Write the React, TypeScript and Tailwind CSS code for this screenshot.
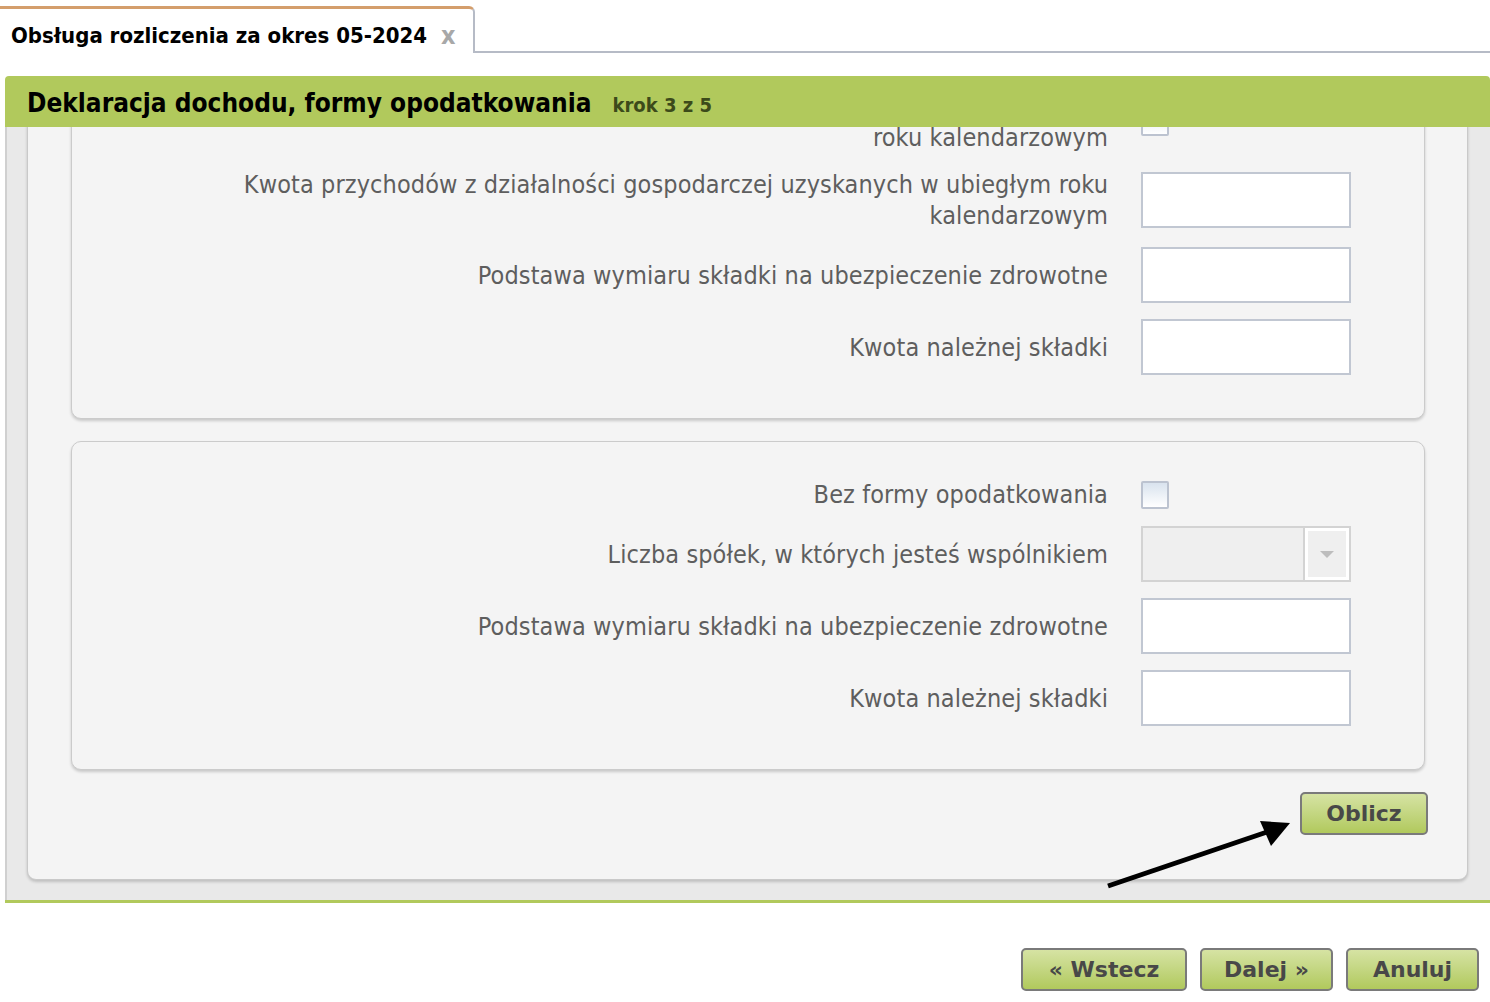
import type { ReactNode } from 'react'

const labelFont = { fontFamily: '"DejaVu Sans Condensed", "DejaVu Sans", Verdana, sans-serif' }
const btnFont = { fontFamily: '"DejaVu Sans", Verdana, sans-serif' }

function TextInput(): ReactNode {
  return <div className="h-[56px] w-[210px] shrink-0 border-2 border-[#c1c7d2] bg-white" />
}

function CheckBox(): ReactNode {
  return (
    <div className="mr-[182px] h-[28px] w-[28px] shrink-0 rounded-[2px] border-2 border-[#bcc3d0] bg-gradient-to-b from-[#d9e3ee] to-white" />
  )
}

function SelectBox(): ReactNode {
  return (
    <div className="flex h-[56px] w-[210px] shrink-0 border-2 border-[#d3d3d3] bg-[#efefef]">
      <div className="flex-1" />
      <div className="flex w-[46px] items-center justify-center border-l-2 border-[#d3d3d3]">
        <div className="flex h-full w-full items-center justify-center border-[3px] border-white">
          <div className="h-0 w-0 border-x-[7px] border-t-[7px] border-x-transparent border-t-[#bdbdbd]" />
        </div>
      </div>
    </div>
  )
}

function Row({ label, children }: { label: ReactNode, children: ReactNode }): ReactNode {
  return (
    <div className="flex items-center justify-end gap-[33px]">
      <div className="text-right text-[25px] leading-[31px] tracking-[0.1px] whitespace-nowrap text-[#5e5e5e]" style={labelFont}>
        {label}
      </div>
      {children}
    </div>
  )
}

function GreenButton({ children, className }: { children: ReactNode, className: string }): ReactNode {
  return (
    <button
      className={`h-[43px] rounded-[5px] border-2 border-[#7a7a7a] bg-gradient-to-b from-[#d6e3a3] to-[#b1c95c] text-[22px] font-bold text-[#484848] ${className}`}
      style={btnFont}
    >
      {children}
    </button>
  )
}

export default function App(): ReactNode {
  return (
    <div className="relative min-h-[1002px] w-[1490px] bg-white">
      {/* Tab bar */}
      <div className="flex pt-[6px]">
        <div className="flex h-[47px] w-[475px] items-center rounded-tr-[6px] border-t-[3px] border-r-2 border-t-[#d49e6c] border-r-[#b6bbc6] bg-white pt-[8px] pl-[11px]">
          <span className="text-[22px] font-bold text-black" style={labelFont}>
            Obsługa rozliczenia za okres 05-2024
          </span>
          <span className="ml-[14px] text-[25px] leading-none font-bold text-[#a8a8a8]" style={labelFont}>
            x
          </span>
        </div>
        <div className="flex-1 border-b-2 border-[#b6bbc6]" />
      </div>

      {/* Wizard panel */}
      <div className="mt-[23px] ml-[5px]">
        <div className="flex h-[51px] items-center rounded-t-[4px] bg-[#b1c95c] pt-[3px] pl-[22px]" style={labelFont}>
          <span className="text-[26px] font-bold text-black">Deklaracja dochodu, formy opodatkowania</span>
          <span className="ml-[21px] pt-[3px] text-[20px] font-bold text-[#3c4a1a]">krok 3 z 5</span>
        </div>

        <div className="flex h-[773px] flex-col justify-end overflow-hidden border-l-2 border-[#d0d0d0] bg-[#e9e9e9] pr-[22px] pb-[20px] pl-[20px]">
          <div className="flex flex-col rounded-b-[9px] border border-[#c9c9c9] bg-[#f4f4f4] pt-[40px] pr-[42px] pb-[44px] pl-[43px] shadow-[0_2px_3px_rgba(0,0,0,0.18)]">
            {/* First section (scrolled, top part out of view) */}
            <div className="flex flex-col gap-[16px] rounded-[10px] border border-[#cbcbcb] bg-[#f4f4f4] pt-[38px] pr-[73px] pb-[43px] shadow-[0_2px_3px_rgba(0,0,0,0.18)]">
              <Row label={<><br />roku kalendarzowym</>}>
                <CheckBox />
              </Row>
              <Row label={<>Kwota przychodów z działalności gospodarczej uzyskanych w ubiegłym roku<br />kalendarzowym</>}>
                <TextInput />
              </Row>
              <Row label="Podstawa wymiaru składki na ubezpieczenie zdrowotne">
                <TextInput />
              </Row>
              <Row label="Kwota należnej składki">
                <TextInput />
              </Row>
            </div>

            {/* Second section */}
            <div className="mt-[22px] flex flex-col gap-[16px] rounded-[10px] border border-[#cbcbcb] bg-[#f4f4f4] pt-[38px] pr-[73px] pb-[43px] shadow-[0_2px_3px_rgba(0,0,0,0.18)]">
              <div className="flex h-[30px] items-center justify-end gap-[33px]">
                <div className="text-right text-[25px] tracking-[0.1px] whitespace-nowrap text-[#5e5e5e]" style={labelFont}>
                  Bez formy opodatkowania
                </div>
                <CheckBox />
              </div>
              <Row label="Liczba spółek, w których jesteś wspólnikiem">
                <SelectBox />
              </Row>
              <Row label="Podstawa wymiaru składki na ubezpieczenie zdrowotne">
                <TextInput />
              </Row>
              <Row label="Kwota należnej składki">
                <TextInput />
              </Row>
            </div>

            <div className="mt-[22px] flex justify-end">
              <GreenButton className="mr-[-3px] w-[128px]">Oblicz</GreenButton>
            </div>
          </div>
        </div>
        <div className="h-[3px] bg-[#b1c95c]" />
      </div>

      {/* Wizard navigation */}
      <div className="mt-[45px] flex justify-end gap-[13px] pr-[11px]">
        <GreenButton className="w-[166px]">« Wstecz</GreenButton>
        <GreenButton className="w-[133px]">Dalej »</GreenButton>
        <GreenButton className="w-[133px]">Anuluj</GreenButton>
      </div>

      {/* Annotation arrow */}
      <svg className="pointer-events-none absolute top-0 left-0" width="1490" height="1002">
        <line x1="1108" y1="886" x2="1270" y2="831" stroke="black" strokeWidth="5" />
        <polygon points="1290,823 1260,821 1271,846" fill="black" />
      </svg>
    </div>
  )
}
